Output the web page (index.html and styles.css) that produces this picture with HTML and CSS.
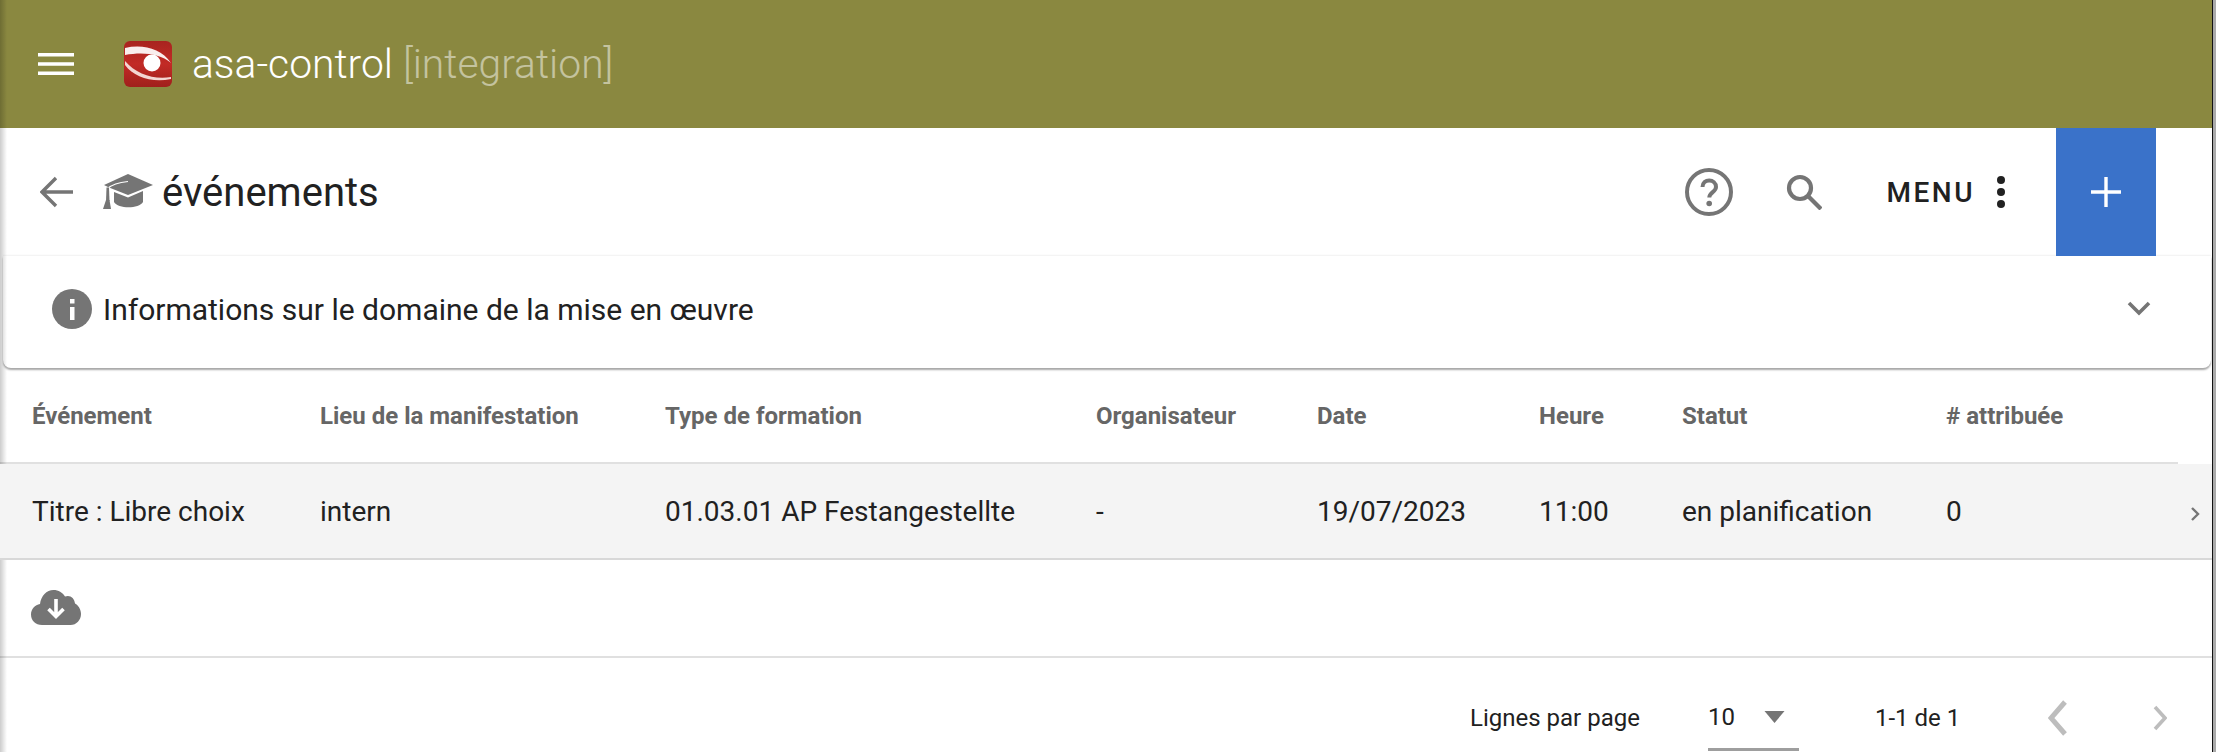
FILE: index.html
```html
<!DOCTYPE html>
<html lang="fr">
<head>
<meta charset="utf-8">
<title>asa-control</title>
<link rel="stylesheet" href="styles.css">
</head>
<body>
<div class="app">
  <header class="appbar">
    <svg class="ico-menu" viewBox="0 0 36 26"><path d="M0 2h36v3.400H0zM0 11.300h36v3.400H0zM0 20.600h36v3.400H0z" fill="#fff"/></svg>
    <svg class="logo" viewBox="0 0 48 46">
      <defs><linearGradient id="lg" x1="0" y1="0" x2="0" y2="1"><stop offset="0" stop-color="#a8241f"/><stop offset=".5" stop-color="#c22b26"/><stop offset="1" stop-color="#a01f1c"/></linearGradient></defs>
      <rect x="0" y="0" width="48" height="46" rx="6" fill="url(#lg)"/>
      <path d="M1 7C18 3 37 7 47 22 35 12 18 11 1 14z" fill="#fff" opacity=".92"/>
      <path d="M1 20C12 33 30 39 47 36v2C28 42 10 36 1 24z" fill="#f3d6d2"/>
      <circle cx="28" cy="22" r="8.500" fill="#fff"/>
    </svg>
    <div class="brand">asa-control <span class="brand-env">[integration]</span></div>
  </header>
  <div class="toolbar">
    <svg class="ico-back" viewBox="0 0 34 32"><path d="M33 16H3M16 2 2 16l14 14" fill="none" stroke="#757575" stroke-width="3.400"/></svg>
    <svg class="ico-cap" viewBox="0 0 50 36">
      <path d="M25 0 50 11 25 21 6 13.500 1 11z" fill="#757575"/>
      <path d="M25 7.500C16 8.500 9 10.500 4.500 14.500" fill="none" stroke="#fff" stroke-width="1.200"/>
      <path d="M3.500 13.500h2.500L6.500 27H3z" fill="#757575"/>
      <path d="M3 26h3.500L8 35H0z" fill="#757575"/>
      <path d="M11 18 25 23.500 40 17v11c-4 7-25 7-29 0z" fill="#757575"/>
    </svg>
    <h1 class="page-title">événements</h1>
    <div class="spacer"></div>
    <svg class="ico-help" viewBox="0 0 48 48"><circle cx="24" cy="24" r="22" fill="none" stroke="#757575" stroke-width="4"/><path d="M17.500 19c0-9 13.500-8.500 13.500 0 0 5-6.700 5.200-6.700 10.500" fill="none" stroke="#757575" stroke-width="4"/><circle cx="24.200" cy="35.500" r="2.800" fill="#757575"/></svg>
    <svg class="ico-search" viewBox="0 0 36 36"><circle cx="14" cy="14" r="11" fill="none" stroke="#757575" stroke-width="4.200"/><path d="m22 22 13 13" stroke="#757575" stroke-width="4.200" fill="none"/></svg>
    <div class="menu-btn"><span>MENU</span><svg class="ico-dots" viewBox="0 0 10 34"><circle cx="5" cy="5" r="4" fill="#212121"/><circle cx="5" cy="17" r="4" fill="#212121"/><circle cx="5" cy="29" r="4" fill="#212121"/></svg></div>
    <div class="add-btn"><svg class="ico-plus" viewBox="0 0 30 30"><path d="M13.300 0h3.400v13.300H30v3.400H16.700V30h-3.400V16.700H0v-3.400h13.300z" fill="#fff"/></svg></div>
  </div>
  <section class="info-panel">
    <svg class="ico-info" viewBox="0 0 40 40"><circle cx="20" cy="20" r="20" fill="#757575"/><rect x="18" y="18" width="4.500" height="13" fill="#fff"/><rect x="18" y="10" width="4.500" height="4.500" fill="#fff"/></svg>
    <span class="info-text">Informations sur le domaine de la mise en œuvre</span>
    <svg class="ico-chev" viewBox="0 0 24 16"><path d="m2 2 10 10L22 2" fill="none" stroke="#757575" stroke-width="3.600"/></svg>
  </section>
  <div class="table-head table-grid">
    <div>Événement</div><div>Lieu de la manifestation</div><div>Type de formation</div><div>Organisateur</div><div>Date</div><div>Heure</div><div>Statut</div><div># attribuée</div>
  </div>
  <div class="table-row table-grid">
    <div>Titre : Libre choix</div><div>intern</div><div>01.03.01 AP Festangestellte</div><div>-</div><div>19/07/2023</div><div>11:00</div><div>en planification</div><div>0</div>
    <svg class="ico-row" viewBox="0 0 10 16"><path d="m2 2 6 6-6 6" fill="none" stroke="#757575" stroke-width="2.400"/></svg>
  </div>
  <div class="actions">
    <svg class="ico-cloud" viewBox="0 0 50 36"><path d="M11 35C4.500 35 0 30.500 0 24.500 0 19 4 15 9 14 10 6 15.500 0 22.500 0c5 0 9 2.500 11.500 6.500 5-2 9.500 1.500 10 7C47.500 15.500 50 19.500 50 24c0 6-4.500 11-10.500 11z" fill="#757575"/><path d="M25 9v17M17.500 19l7.500 7.500 7.500-7.500" fill="none" stroke="#fff" stroke-width="3.600"/></svg>
  </div>
  <footer class="pager">
    <span class="pager-label">Lignes par page</span>
    <div class="pager-select"><span>10</span><svg class="ico-caret" viewBox="0 0 20 12"><path d="M0 0h20L10 12z" fill="#757575"/></svg></div>
    <span class="pager-range">1-1 de 1</span>
    <svg class="ico-prev" viewBox="0 0 20 36"><path d="M17 2 3 18l14 16" fill="none" stroke="#bdbdbd" stroke-width="5"/></svg>
    <svg class="ico-next" viewBox="0 0 14 26"><path d="m2 2 10 11L2 24" fill="none" stroke="#bdbdbd" stroke-width="3.600"/></svg>
  </footer>
</div>
</body>
</html>
```

FILE: styles.css
```css
* { box-sizing: border-box; }
html, body { margin: 0; height: 100%; background: #fff; }
body { overflow: hidden; font-family: Roboto, "Liberation Sans", sans-serif; color: #212121; }
.app { position: relative; width: 2216px; height: 752px; }
.app::before { content: ""; position: absolute; left: 0; top: 0; bottom: 0; width: 7px; background: linear-gradient(to right, rgba(0,0,0,.2), rgba(0,0,0,0)); pointer-events: none; }
.app::after { content: ""; position: absolute; left: 2212px; top: 0; bottom: 0; width: 4px; background: linear-gradient(to right, #111 1px, #aaa 1px); pointer-events: none; }
.appbar { height: 128px; background: #8a8840; display: flex; align-items: center; padding-left: 38px; }
.ico-menu { width: 36px; height: 26px; }
.logo { width: 48px; height: 46px; margin-left: 50px; }
.brand { margin-left: 20px; font-size: 40.800px; color: #fff; font-weight: 300; }
.brand-env { color: rgba(255,255,255,.5); }
.toolbar { height: 128px; display: flex; align-items: center; padding-left: 40px; padding-right: 60px; }
.ico-back { width: 34px; height: 32px; }
.ico-cap { width: 50px; height: 36px; margin-left: 29px; }
.page-title { margin: 0 0 0 9px; font-size: 40px; font-weight: 400; }
.spacer { flex: 1; }
.ico-help { width: 48px; height: 48px; }
.ico-search { width: 36px; height: 36px; margin-left: 53px; }
.menu-btn { display: flex; align-items: center; margin-left: 65px; font-size: 28px; font-weight: 500; letter-spacing: 2.500px; }
.ico-dots { width: 10px; height: 34px; margin-left: 21px; }
.add-btn { width: 100px; height: 128px; margin-left: 50px; background: #3a72c9; display: flex; align-items: center; justify-content: center; }
.ico-plus { width: 30px; height: 30px; }
.info-panel { height: 112px; margin: 0 5px 0 3px; background: #fff; border-radius: 0 0 8px 8px; display: flex; align-items: center; padding: 0 60px 6px 49px; box-shadow: 0 2px 2px rgba(0,0,0,.35), 0 -1px 2px rgba(0,0,0,.06); }
.ico-info { width: 40px; height: 40px; }
.info-text { margin-left: 11px; font-size: 30px; flex: 1; }
.ico-chev { width: 24px; height: 16px; }
.table-grid { display: grid; grid-template-columns: 288px 345px 431px 221px 222px 143px 264px 1fr; padding-left: 32px; align-items: center; }
.table-head { height: 96px; padding-top: 2px; font-size: 24px; font-weight: 700; color: #666; margin-right: 38px; border-bottom: 2px solid #e0e0e0; }
.table-row { height: 96px; background: #f4f4f4; font-size: 28px; border-bottom: 2px solid #d8d8d8; margin-right: 4px; position: relative; }
.ico-row { position: absolute; right: 12px; top: 42px; width: 10px; height: 16px; }
.actions { height: 98px; display: flex; align-items: center; padding-left: 31px; border-bottom: 2px solid #e0e0e0; margin-right: 4px; }
.ico-cloud { width: 50px; height: 36px; }
.pager { height: 94px; display: flex; align-items: center; font-size: 24px; padding: 26px 0 0 1470px; margin-right: 4px; }
.pager-select { display: flex; align-items: center; width: 91px; height: 66px; margin-left: 68px; border-bottom: 3px solid #9e9e9e; }
.ico-caret { width: 21px; height: 12px; margin-left: 29px; }
.pager-range { margin-left: 76px; }
.ico-prev { width: 20px; height: 36px; margin-left: 88px; }
.ico-next { width: 14px; height: 26px; margin-left: 85px; }
```
